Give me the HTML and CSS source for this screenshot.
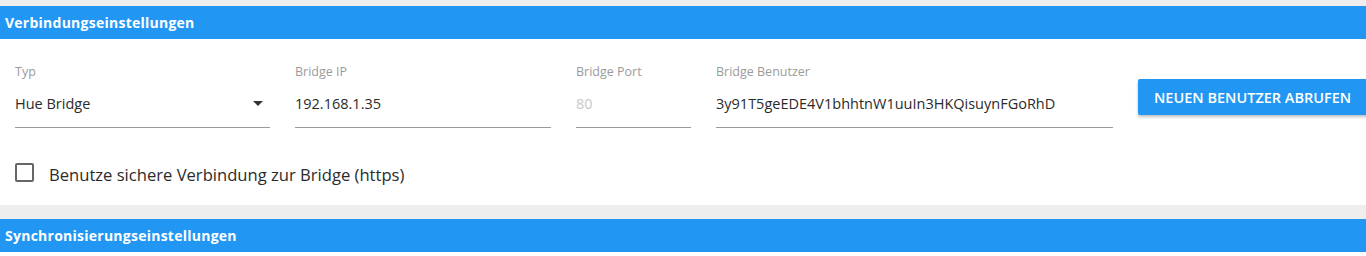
FILE: index.html
```html
<!DOCTYPE html>
<html lang="de">
<head>
<meta charset="utf-8">
<title>Einstellungen</title>
<link rel="stylesheet" href="styles.css">
</head>
<body>
<div class="page">
  <section class="card">
    <header class="card-header">Verbindungseinstellungen</header>
    <div class="card-body">
      <div class="fields">
        <div class="field field-type">
          <label class="field-label">Typ</label>
          <div class="field-input select">
            <span class="value">Hue Bridge</span>
            <span class="caret"></span>
          </div>
        </div>
        <div class="field field-ip">
          <label class="field-label">Bridge IP</label>
          <div class="field-input"><span class="value">192.168.1.35</span></div>
        </div>
        <div class="field field-port">
          <label class="field-label">Bridge Port</label>
          <div class="field-input"><span class="value disabled">80</span></div>
        </div>
        <div class="field field-user">
          <label class="field-label">Bridge Benutzer</label>
          <div class="field-input"><span class="value">3y91T5geEDE4V1bhhtnW1uuIn3HKQisuynFGoRhD</span></div>
        </div>
        <button class="btn">Neuen Benutzer abrufen</button>
      </div>
      <label class="check-row">
        <span class="checkbox"></span>
        <span class="check-label">Benutze sichere Verbindung zur Bridge (https)</span>
      </label>
    </div>
  </section>
  <section class="card">
    <header class="card-header">Synchronisierungseinstellungen</header>
    <div class="card-body empty"></div>
  </section>
</div>
</body>
</html>
```
FILE: styles.css
```css
html, body {
  margin: 0;
  padding: 0;
  background: #eeeeee;
  font-family: "Open Sans", "Noto Sans", sans-serif;
  color: #333333;
  overflow: hidden;
}
.page {
  padding-top: 6px;
  display: flex;
  flex-direction: column;
  gap: 14px;
}
.card {
  background: #ffffff;
  overflow: hidden;
}
.card-header {
  background: #2196f3;
  color: #ffffff;
  height: 33px;
  line-height: 33px;
  padding-left: 5px;
  font-size: 14px;
  font-weight: 700;
  letter-spacing: 0.25px;
}
.card-body {
  padding: 25px 0 13px 15px;
}
.card-body.empty {
  padding: 0;
  height: 10px;
}
.fields {
  display: flex;
  align-items: flex-start;
  gap: 25px;
}
.field {
  display: flex;
  flex-direction: column;
  flex-shrink: 0;
}
.field-type { width: 255px; }
.field-ip { width: 256px; }
.field-port { width: 115px; }
.field-user { width: 397px; }
.field-label {
  font-size: 12.5px;
  line-height: 16px;
  height: 16px;
  color: #9b9b9b;
}
.field-input {
  height: 47px;
  border-bottom: 1px solid #9a9a9a;
  display: flex;
  align-items: center;
  font-size: 14.5px;
  color: #2b2b2b;
}
.value.disabled {
  color: #c8c8c8;
}
.select {
  justify-content: space-between;
}
.caret {
  width: 0;
  height: 0;
  border-left: 5px solid transparent;
  border-right: 5px solid transparent;
  border-top: 5px solid #333333;
  margin-right: 7px;
}
.btn {
  margin-top: 15px;
  height: 36px;
  padding: 0 16px;
  border: none;
  border-radius: 2px;
  background: #2196f3;
  color: #ffffff;
  font-family: inherit;
  font-size: 14.5px;
  font-weight: 600;
  text-transform: uppercase;
  white-space: nowrap;
  box-shadow: 0 2px 3px rgba(0,0,0,0.25);
  flex-shrink: 0;
  width: 240px;
  text-align: left;
}
.check-row {
  display: flex;
  align-items: center;
  height: 40px;
  margin-top: 24px;
  gap: 15px;
}
.checkbox {
  width: 15px;
  height: 15px;
  border: 2px solid #666666;
  border-radius: 2px;
}
.check-label {
  font-size: 16.6px;
  color: #2b2b2b;
  padding-top: 4px;
}
```
